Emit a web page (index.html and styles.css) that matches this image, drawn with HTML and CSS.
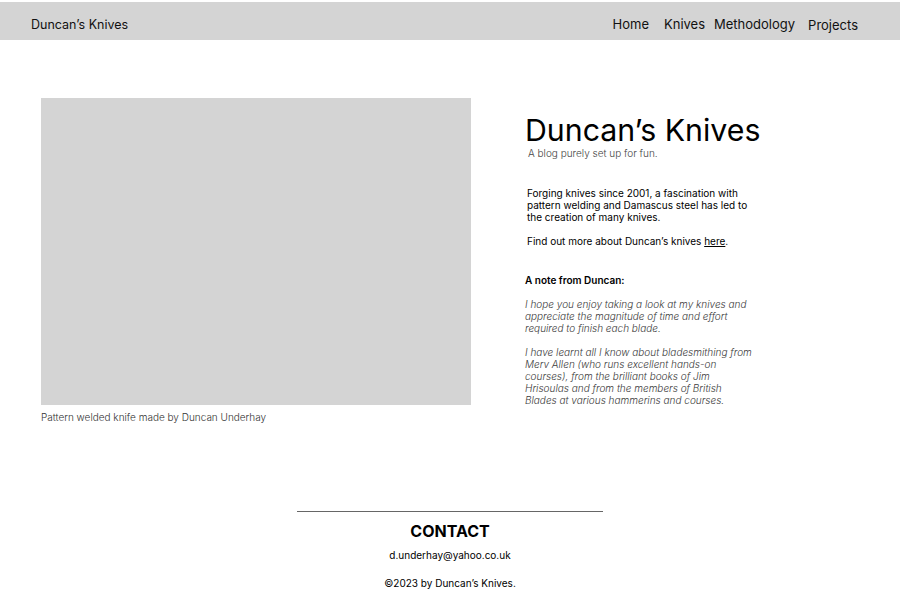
FILE: index.html
```html
<!DOCTYPE html>
<html lang="en">
<head>
<meta charset="utf-8">
<title>Duncan's Knives</title>
<link rel="stylesheet" href="styles.css">
</head>
<body>
<header class="topbar">
  <div class="brand">Duncan’s Knives</div>
  <nav class="nav">
    <a class="nav-link nav-home" href="#">Home</a>
    <a class="nav-link nav-knives" href="#">Knives</a>
    <a class="nav-link nav-method" href="#">Methodology</a>
    <a class="nav-link nav-projects" href="#">Projects</a>
  </nav>
</header>
<main class="hero">
  <figure class="photo">
    <div class="photo-box"></div>
    <figcaption class="caption">Pattern welded knife made by Duncan Underhay</figcaption>
  </figure>
  <section class="intro">
    <h1 class="title">Duncan’s Knives</h1>
    <p class="subtitle">A blog purely set up for fun.</p>
    <p class="body-text">Forging knives since 2001, a fascination with pattern welding and Damascus steel has led to the creation of many knives.</p>
    <p class="body-text">Find out more about Duncan’s knives <a class="link" href="#">here</a>.</p>
    <h2 class="note-head">A note from Duncan:</h2>
    <p class="note">I hope you enjoy taking a look at my knives and appreciate the magnitude of time and effort required to finish each blade.</p>
    <p class="note">I have learnt all I know about bladesmithing from Merv Allen (who runs excellent hands-on courses), from the brilliant books of Jim Hrisoulas and from the members of British Blades at various hammerins and courses.</p>
  </section>
</main>
<footer class="footer">
  <div class="rule"></div>
  <h2 class="contact">CONTACT</h2>
  <p class="email">d.underhay@yahoo.co.uk</p>
  <p class="copy">©2023 by Duncan’s Knives.</p>
</footer>
</body>
</html>
```
FILE: styles.css
```css
* { box-sizing: border-box; }
html, body { margin: 0; padding: 0; }
body {
  font-family: Inter, "Noto Sans", sans-serif;
  color: #000;
  background: #fff;
  padding-top: 2px;
}
.topbar {
  height: 38px;
  background: #d4d4d4;
  display: flex;
  align-items: center;
  justify-content: space-between;
  padding: 6px 42px 0 31px;
}
.brand { font-size: 12.5px; color: #111; }
.nav { display: flex; align-items: center; }
.nav-link { font-size: 13px; color: #111; text-decoration: none; }
.nav-knives { margin-left: 15px; }
.nav-method { margin-left: 9px; }
.nav-projects { margin-left: 13px; padding-top: 2px; }

.hero {
  display: flex;
  padding: 58px 0 0 41px;
}
.photo { margin: 0; width: 430px; }
.photo-box { width: 430px; height: 307px; background: #d4d4d4; }
.caption {
  margin-top: 6px;
  font-size: 10px;
  font-weight: 300;
  color: #333;
}
.intro { margin-left: 54px; width: 260px; padding-top: 14px; }
.title {
  margin: 0;
  font-size: 30.3px;
  font-weight: 400;
  line-height: 36px;
  white-space: nowrap;
}
.subtitle {
  margin: -1px 0 0 3px;
  font-size: 10px;
  font-weight: 300;
  color: #444;
  line-height: 12px;
}
.body-text {
  margin: 28px 0 0 2px;
  font-size: 10px;
  line-height: 12px;
  width: 230px;
}
.body-text + .body-text { margin-top: 12px; }
.link { color: #000; text-decoration: underline; }
.note-head {
  margin: 27px 0 0;
  font-size: 10px;
  font-weight: 600;
  line-height: 12px;
}
.note {
  margin: 12px 0 0;
  font-size: 10px;
  font-style: italic;
  font-weight: 300;
  color: #3a3a3a;
  line-height: 12px;
  width: 230px;
}

.footer {
  display: flex;
  flex-direction: column;
  align-items: center;
  padding-top: 88px;
}
.rule { width: 306px; height: 1px; background: #666; }
.contact {
  margin: 9px 0 0;
  font-size: 16px;
  font-weight: 700;
  line-height: 20px;
}
.email { margin: 8px 0 0; font-size: 10px; line-height: 12px; }
.copy { margin: 16px 0 0; font-size: 10px; line-height: 12px; }
```
